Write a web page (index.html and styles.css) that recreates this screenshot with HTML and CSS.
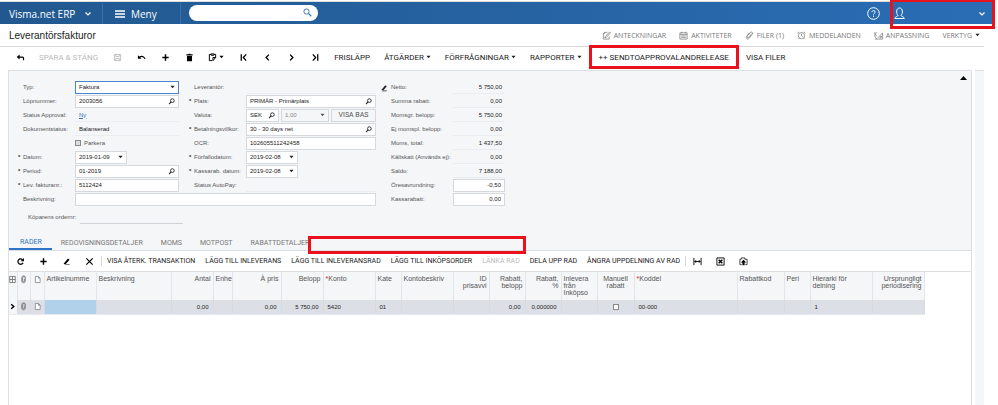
FILE: index.html
```html
<!DOCTYPE html>
<html lang="sv">
  <head>
    <meta charset="utf-8">
    <title>Leverantörsfakturor</title>
    <link rel="stylesheet" href="styles.css">
  </head>
  <body>
    <!-- shared icons -->
    <svg class="defs" width="0" height="0">
      <symbol id="i-search" viewBox="0 0 8 8"><circle cx="5" cy="3" r="2.1" fill="none" stroke="currentColor"/><path d="M3.5 4.5L1.2 7" stroke="currentColor" stroke-width="1.2"/></symbol>
      <symbol id="i-caret" viewBox="0 0 6 4"><path d="M.5.5h5L3 3.5z" fill="currentColor"/></symbol>
      <symbol id="i-chev" viewBox="0 0 8 6"><path d="M1.5 1.5L4 4l2.500-2.500" fill="none" stroke="currentColor" stroke-width="1.200"/></symbol>
      <symbol id="i-plus" viewBox="0 0 10 10"><path d="M5 1.500v7M1.500 5h7" stroke="currentColor" stroke-width="1.600"/></symbol>
      <symbol id="i-pen" viewBox="0 0 10 10"><path d="M2 7.200L6.600 1.600l1.800 1.500L4.200 7.700H2zM2 9h6.500v-.8H4z" fill="currentColor"/></symbol>
      <symbol id="i-clip" viewBox="0 0 10 10"><path d="M7.500 3L4 7.200c-1 1-2.500-.2-1.700-1.300L6 1.600c1.300-1.200 3.200.4 2.200 1.800L4.600 8.200C3 10 .3 8 1.700 6L5 2" fill="none" stroke="currentColor" stroke-width=".8"/></symbol>
      <symbol id="i-clip2" viewBox="0 0 8 10"><path d="M2 3v4c0 2.300 4 2.300 4 0V3c0-2-3-2-3 0v4c0 1 2 1 2 0V4M2 3c0-3 4-2.500 4.500 0" fill="none" stroke="currentColor"/></symbol>
      <symbol id="i-doc" viewBox="0 0 8 10"><path d="M1.500 1.500h3.500l2 2v5H1.500zM5 1.500v2h2" fill="#fff" stroke="currentColor" stroke-width=".8"/></symbol>
    </svg>

    <header class="topbar">
      <button class="brand">Visma.net ERP <svg class="chev"><use href="#i-chev"/></svg></button>
      <button class="menu">
        <svg width="10" height="8" viewBox="0 0 10 8"><path d="M0 1h10M0 4h10M0 7h10" stroke="#fff" stroke-width="1.400"/></svg>
        Meny
      </button>
      <label class="search">
        <input type="text" aria-label="Sök">
        <svg class="lens" width="9" height="9" viewBox="0 0 9 9"><circle cx="3.500" cy="3.500" r="2.600" fill="none" stroke="#3f79b8"/><path d="M5.400 5.400L8.300 8.300" stroke="#3f79b8" stroke-width="1.300"/></svg>
      </label>
      <button class="help" aria-label="Hjälp">
        <svg width="13" height="13" viewBox="0 0 13 13" fill="none" stroke="#fff"><circle cx="6.500" cy="6.500" r="5.800"/><path d="M4.900 5.200c0-2.200 3.400-2 3.300-.1 0 1.200-1.700 1.200-1.700 2.600"/><path d="M6.500 8.700v1.200"/></svg>
      </button>
      <button class="user" aria-label="Användare">
        <svg width="11" height="13" viewBox="0 0 11 13" fill="none" stroke="#fff"><path d="M4 8.500C2 6.500 2 1 5.500 1S9 6.500 7 8.500c0 1 3 1 3.300 3H.7c.3-2 3.300-2 3.300-3z"/></svg>
        <svg class="chev"><use href="#i-chev"/></svg>
      </button>
    </header>

    <div class="titlebar">
      <h1>Leverantörsfakturor</h1>
      <nav class="links">
        <a href="#"><svg viewBox="0 0 10 10"><path d="M6 1.500H3L1.500 3v6h6.500V6M3.500 6.500L8.500 1l1 1-5 5.300-1.500.3zM1.500 3H3V1.500" fill="none" stroke="currentColor" stroke-width=".8"/></svg>ANTECKNINGAR</a>
        <a href="#"><svg viewBox="0 0 10 10"><path d="M1 2h8v7H1zM1 4h8M3 .8V2.500M7 .8V2.500M2.500 5.500h5M2.500 7.200h5" fill="none" stroke="currentColor" stroke-width=".8"/></svg>AKTIVITETER</a>
        <a href="#"><svg><use href="#i-clip"/></svg>FILER (1)</a>
        <a href="#"><svg viewBox="0 0 10 10"><path d="M5 3v2.500l1.500.8M.6 2.500L2.300 1M9.400 2.500L7.700 1M2.300 8L1.500 9M7.700 8l.8 1" fill="none" stroke="currentColor" stroke-width=".8"/><circle cx="5" cy="5.200" r="3.500" fill="none" stroke="currentColor" stroke-width=".8"/></svg>MEDDELANDEN</a>
        <a href="#"><svg viewBox="0 0 10 10"><path d="M1 1v5l2 3M3 1.500L1.500 3.500 3 6M1 9h8.500V2L4.500 7.500M6.500 7.500H8V5.500z" fill="none" stroke="currentColor" stroke-width=".8"/></svg>ANPASSNING</a>
        <a href="#">VERKTYG<svg class="caret"><use href="#i-caret"/></svg></a>
      </nav>
    </div>

    <div class="toolbar">
      <button class="ico" aria-label="Tillbaka"><svg viewBox="0 0 10 10"><path d="M.8 4.500L4 1.800v2h3c1.500 0 2 .8 2 2V8H7.700V6.300c0-.8-.2-1-.9-1H4v2z" fill="currentColor"/></svg></button>
      <button class="off" disabled>SPARA &amp; STÄNG</button>
      <button class="ico off" disabled aria-label="Spara"><svg viewBox="0 0 10 10"><path d="M1.500 1.500h7v7h-7zM3 1.500v2.300h4V1.500M3 8.500V6h4v2.500" fill="none" stroke="currentColor"/></svg></button>
      <button class="ico" aria-label="Ångra"><svg viewBox="0 0 10 10"><path d="M1 2.500v4h4L3.600 5.200C5 4 7 4.300 8.600 7L9.500 6.500C8 3 5 2.300 2.600 4z" fill="currentColor"/></svg></button>
      <button class="ico" aria-label="Ny"><svg><use href="#i-plus"/></svg></button>
      <button class="ico" aria-label="Ta bort"><svg viewBox="0 0 10 10"><path d="M1.500 1.500h2.300l.4-.8h1.600l.4.8h2.300v1.200h-7zM2.200 3.300h5.600v6H2.200z" fill="currentColor"/></svg></button>
      <button class="ico wide" aria-label="Urklipp"><svg viewBox="0 0 10 10"><path d="M3.500 1.500h-2v7h3M6.500 1.500h2v3.500L5.500 8.500M3.500 2.500v-1.500h3v1.500zM8.500 5h-3v3.500" fill="none" stroke="currentColor" stroke-width="1.100"/></svg><svg class="caret"><use href="#i-caret"/></svg></button>
      <button class="ico" aria-label="Första"><svg viewBox="0 0 10 10"><path d="M2.500 1.500v7M8 1.500L4.800 5 8 8.500" fill="none" stroke="currentColor" stroke-width="1.400"/></svg></button>
      <button class="ico" aria-label="Föregående"><svg viewBox="0 0 10 10"><path d="M6.500 1.800L3.500 5l3 3.200" fill="none" stroke="currentColor" stroke-width="1.500"/></svg></button>
      <button class="ico" aria-label="Nästa"><svg viewBox="0 0 10 10"><path d="M3.500 1.800L6.500 5l-3 3.200" fill="none" stroke="currentColor" stroke-width="1.500"/></svg></button>
      <button class="ico" aria-label="Sista"><svg viewBox="0 0 10 10"><path d="M7.500 1.500v7M2 1.500L5.200 5 2 8.500" fill="none" stroke="currentColor" stroke-width="1.400"/></svg></button>
      <button>FRISLÄPP</button>
      <button>ÅTGÄRDER<svg class="caret"><use href="#i-caret"/></svg></button>
      <button>FÖRFRÅGNINGAR<svg class="caret"><use href="#i-caret"/></svg></button>
      <button>RAPPORTER<svg class="caret"><use href="#i-caret"/></svg></button>
      <button class="marked">++ SENDTOAPPROVALANDRELEASE</button>
      <button>VISA FILER</button>
    </div>

    <main>
      <section class="panel">
        <button class="collapse" aria-label="Fäll ihop"><svg width="7" height="4" viewBox="0 0 7 4"><path d="M0 4L3.500 0 7 4z"/></svg></button>
        <form class="form">
          <label for="typ">Typ:</label>
          <div class="field focus"><select id="typ"><option>Faktura</option></select><svg class="caret"><use href="#i-caret"/></svg></div>
          <label for="lev">Leverantör:</label>
          <div class="line"><output id="lev"></output></div>
          <label for="netto"><svg class="pen"><use href="#i-pen"/></svg>Netto:</label>
          <div class="line num"><output id="netto">5 750,00</output></div>

          <label for="lop">Löpnummer:</label>
          <div class="field"><input id="lop" value="2003056"><svg class="find"><use href="#i-search"/></svg></div>
          <label class="req" for="plats">Plats:</label>
          <div class="field"><input id="plats" value="PRIMÄR - Primärplats"><svg class="find"><use href="#i-search"/></svg></div>
          <label for="rab">Summa rabatt:</label>
          <div class="line num"><output id="rab">0,00</output></div>

          <span class="lbl">Status Approval:</span>
          <div class="line"><a href="#">Ny</a></div>
          <label for="valuta">Valuta:</label>
          <div class="currency">
            <div class="field"><input id="valuta" value="SEK"><svg class="find"><use href="#i-search"/></svg></div>
            <div class="field dis"><select aria-label="Kurs" disabled><option>1,00</option></select><svg class="caret"><use href="#i-caret"/></svg></div>
            <button type="button">VISA BAS</button>
          </div>
          <label for="mgr">Momsgr. belopp:</label>
          <div class="line num"><output id="mgr">5 750,00</output></div>

          <label for="status">Dokumentstatus:</label>
          <div class="line"><output id="status">Balanserad</output></div>
          <label class="req" for="villkor">Betalningsvillkor:</label>
          <div class="field"><input id="villkor" value="30 - 30 days net"><svg class="find"><use href="#i-search"/></svg></div>
          <label for="ej">Ej momspl. belopp:</label>
          <div class="line num"><output id="ej">0,00</output></div>

          <span></span>
          <div class="check"><input type="checkbox" id="parkera"><label for="parkera">Parkera</label></div>
          <label for="ocr">OCR:</label>
          <div class="field"><input id="ocr" value="102605511242458"></div>
          <label for="moms">Moms, total:</label>
          <div class="line num"><output id="moms">1 437,50</output></div>

          <label class="req" for="datum">Datum:</label>
          <div class="field date"><input id="datum" value="2019-01-09"><svg class="caret"><use href="#i-caret"/></svg></div>
          <label class="req" for="forfall">Förfallodatum:</label>
          <div class="field date"><input id="forfall" value="2019-02-08"><svg class="caret"><use href="#i-caret"/></svg></div>
          <label for="kall">Källskatt (Används ej):</label>
          <div class="line num"><output id="kall">0,00</output></div>

          <label class="req" for="period">Period:</label>
          <div class="field"><input id="period" value="01-2019"><svg class="find"><use href="#i-search"/></svg></div>
          <label class="req" for="kassa">Kassarab. datum:</label>
          <div class="field date"><input id="kassa" value="2019-02-08"><svg class="caret"><use href="#i-caret"/></svg></div>
          <label for="saldo">Saldo:</label>
          <div class="line num"><output id="saldo">7 188,00</output></div>

          <label class="req" for="fnr">Lev. fakturanr.:</label>
          <div class="field"><input id="fnr" value="5112424"></div>
          <label for="autopay">Status AutoPay:</label>
          <div class="line"><output id="autopay"></output></div>
          <label for="ores">Öresavrundning:</label>
          <div class="field num"><input id="ores" value="-0,50"></div>

          <label for="besk">Beskrivning:</label>
          <div class="field span"><input id="besk"></div>
          <label for="krab">Kassarabatt:</label>
          <div class="field num"><input id="krab" value="0,00"></div>
        </form>
        <div class="order">
          <label for="order">Köparens ordernr:</label>
          <input id="order">
        </div>

        <div class="tabs" role="tablist">
          <button class="active" role="tab">RADER</button>
          <button role="tab">REDOVISNINGSDETALJER</button>
          <button role="tab">MOMS</button>
          <button role="tab">MOTPOST</button>
          <button role="tab">RABATTDETALJER</button>
          <span class="tabmark"></span>
        </div>

        <div class="gridbar">
          <button class="ico" aria-label="Uppdatera"><svg viewBox="0 0 10 10"><path d="M7.800 6.500A3 3 0 1 1 7.300 3" fill="none" stroke="currentColor" stroke-width="1.400"/><path d="M8.800 1v3.700H5.200z" fill="currentColor"/></svg></button>
          <button class="ico" aria-label="Lägg till rad"><svg><use href="#i-plus"/></svg></button>
          <button class="ico" aria-label="Redigera"><svg><use href="#i-pen"/></svg></button>
          <button class="ico" aria-label="Radera"><svg viewBox="0 0 10 10"><path d="M1.500 1.500l7 7M8.500 1.500l-7 7" stroke="currentColor" stroke-width="1.300"/></svg></button>
          <i class="sep"></i>
          <button>VISA ÅTERK. TRANSAKTION</button>
          <button>LÄGG TILL INLEVERANS</button>
          <button>LÄGG TILL INLEVERANSRAD</button>
          <button>LÄGG TILL INKÖPSORDER</button>
          <button class="off" disabled>LÄNKA RAD</button>
          <button>DELA UPP RAD</button>
          <button>ÅNGRA UPPDELNING AV RAD</button>
          <i class="sep"></i>
          <button class="ico" aria-label="Anpassa bredd"><svg viewBox="0 0 10 10"><path d="M1 1v8M9 1v8M2 5h6M3.500 3.500L2 5l1.500 1.500M6.500 3.500L8 5 6.500 6.500" fill="none" stroke="currentColor"/></svg></button>
          <button class="ico" aria-label="Exportera"><svg viewBox="0 0 10 10"><path d="M1 1h8v8H1z" fill="none" stroke="currentColor"/><path d="M3 3l4 4M7 3L3 7" stroke="currentColor" stroke-width="1.600"/></svg></button>
          <button class="ico" aria-label="Ladda upp"><svg viewBox="0 0 10 10"><path d="M3 8.500H1v-6h1.500V1h4v1.500H9v6H7" fill="none" stroke="currentColor" stroke-width=".8"/><path d="M5 3L2 6h1.800v3.200h2.400V6H8z" fill="currentColor"/></svg></button>
        </div>

        <div class="grid">
          <table>
            <colgroup>
              <col class="w8"><col class="w13"><col class="w14"><col class="w52"><col class="w75"><col class="w42"><col class="w19"><col class="w49"><col class="w42"><col class="w52"><col class="w26"><col class="w52"><col class="w36"><col class="w36"><col class="w36"><col class="w36"><col class="w37"><col class="w103"><col class="w47"><col class="w26"><col class="w62"><col class="w52">
            </colgroup>
            <thead>
              <tr>
                <th class="pic"><svg viewBox="0 0 8 10"><path d="M.8 1.500h6.400v7H.8zM.8 5h6.400M4 1.500v7" fill="none" stroke="currentColor"/></svg></th>
                <th class="pic"><svg><use href="#i-clip2"/></svg></th>
                <th class="pic"><svg><use href="#i-doc"/></svg></th>
                <th>Artikelnumme</th>
                <th>Beskrivning</th>
                <th class="r">Antal</th>
                <th>Enhe</th>
                <th class="r">À pris</th>
                <th class="r">Belopp</th>
                <th class="must">Konto</th>
                <th>Kate</th>
                <th>Kontobeskriv</th>
                <th class="r">ID<br>prisavvi</th>
                <th class="r">Rabatt,<br>belopp</th>
                <th class="r">Rabatt,<br>%</th>
                <th>Inlevera<br>från<br>Inköpso</th>
                <th class="c">Manuell<br>rabatt</th>
                <th class="must">Koddel</th>
                <th>Rabattkod</th>
                <th>Peri</th>
                <th>Hierarki för<br>delning</th>
                <th class="r">Ursprungligt<br>periodisering</th>
              </tr>
            </thead>
            <tbody>
              <tr>
                <td class="pic cur"><svg viewBox="0 0 8 10"><path d="M2.500 2.500L5.500 5l-3 2.500" fill="none" stroke="#000" stroke-width="1.600"/></svg></td>
                <td class="pic"><svg><use href="#i-clip2"/></svg></td>
                <td class="pic"><svg><use href="#i-doc"/></svg></td>
                <td class="sel"></td>
                <td></td>
                <td class="r">0,00</td>
                <td></td>
                <td class="r">0,00</td>
                <td class="r">5 750,00</td>
                <td>5420</td>
                <td>01</td>
                <td></td>
                <td></td>
                <td class="r">0,00</td>
                <td class="r">0,000000</td>
                <td></td>
                <td class="c"><input type="checkbox" aria-label="Manuell rabatt"></td>
                <td>00-000</td>
                <td></td>
                <td></td>
                <td>1</td>
                <td></td>
              </tr>
            </tbody>
          </table>
        </div>
      </section>
      <aside class="gutter"></aside>
    </main>
  </body>
</html>
```
FILE: styles.css
```css
*{
  box-sizing: border-box;
  margin: 0;
  padding: 0;
}
body{
  min-height: 100vh;
  display: flex;
  flex-direction: column;
  overflow-x: hidden;
  background-color: #fff;
  color: #222;
  font: 6px "Liberation Sans", Arial, sans-serif;
}
button, input, select{
  border: 0;
  background: none;
  color: inherit;
  font: inherit;
  appearance: none;
  outline: none;
}
svg{
  flex: none;
}
.defs{
  position: absolute;
}
.caret{
  width: 5px;
  height: 4px;
}
.chev{
  width: 8px;
  height: 6px;
}

/* top bar */
.topbar{
  height: 24px;
  margin-right: 3px;
  padding-top: 2px;
  display: flex;
  background: linear-gradient(90deg, #22588f, #2a6db5) 0 1px no-repeat;
  border-top: 1px solid #fff;
  box-shadow: inset 0 1px #ddd;
  color: #fff;
  font: 10px "Open Sans", sans-serif;
}
.topbar button{
  display: flex;
  align-items: center;
  border-right: 1px solid #3a6fa8;
}
.brand{
  width: 103px;
  padding-left: 9px;
  gap: 9px;
}
.menu{
  width: 78px;
  padding-left: 12px;
  gap: 6px;
}
.search{
  position: relative;
  padding: 2px 0 0 8px;
}
.search input{
  width: 129px;
  height: 16px;
  padding: 0 18px 0 8px;
  border-radius: 8px;
  background-color: #fff;
  color: #222;
}
.lens{
  position: absolute;
  right: 6px;
  top: 5px;
}
.topbar .help{
  margin-left: auto;
  padding-right: 10px;
  border: 0;
}
.topbar .user{
  position: relative;
  width: 105px;
  padding: 0 9px 0 4px;
  justify-content: space-between;
  border: 0;
}
.user::after{
  content: "";
  position: absolute;
  inset: -4px 0 -5px 0;
  border: 3px solid #e8111c;
}

/* title and page links */
.titlebar{
  height: 23px;
  margin-right: 14px;
  padding: 0 4px 0 9px;
  display: flex;
  align-items: center;
  justify-content: space-between;
  border-bottom: 1px solid #d9d9d9;
}
h1{
  font-size: 10px;
  font-weight: normal;
}
.links{
  display: flex;
  gap: 13px;
}
.links a{
  display: flex;
  align-items: center;
  gap: 3px;
  color: #777;
  font: 7px "Open Sans", sans-serif;
  text-decoration: none;
}
.links svg{
  width: 9px;
  height: 9px;
}
.links .caret{
  width: 5px;
  height: 4px;
  color: #222;
}

/* toolbars */
.toolbar, .gridbar{
  display: flex;
  color: #222;
  font-family: Roboto, "Liberation Sans", sans-serif;
}
.toolbar{
  height: 23px;
  padding: 0 0 3px 8px;
  font-size: 8px;
}
.toolbar button, .gridbar button{
  display: flex;
  align-items: center;
  justify-content: center;
  gap: 2px;
  padding: 0 7px;
  white-space: nowrap;
}
.toolbar .ico, .gridbar .ico{
  width: 24px;
  padding: 0;
  color: #000;
}
.toolbar .wide{
  width: 30px;
}
.ico svg{
  width: 9px;
  height: 9px;
}
.ico .caret{
  width: 5px;
  height: 4px;
}
.toolbar .off, .gridbar .off{
  color: #bbb;
}
.toolbar .marked{
  height: 24px;
  margin-top: -2px;
  border: 3px solid #e8111c;
}

/* main panel */
main{
  flex: 1;
  margin: 0 14px 0 8px;
  display: flex;
  gap: 3px;
}
.panel{
  position: relative;
  flex: 1;
  min-width: 0;
  display: flex;
  flex-direction: column;
  border: 1px solid #dcdfe3;
  border-bottom: 0;
  background-color: #f4f6f8;
}
.gutter{
  width: 9px;
  background-color: #f4f6f8;
  border-top: 1px solid #dcdfe3;
}
.collapse{
  position: absolute;
  right: 4px;
  top: 5px;
  display: flex;
}
.form{
  padding: 9px 0 0 9px;
  display: grid;
  grid-template-columns: 57px 104px 67px 130px 77px 52px;
  grid-auto-rows: 14px;
  align-items: center;
}
.form > label, .lbl{
  position: relative;
  justify-self: end;
  width: 57px;
  padding-left: 5px;
  color: #555;
  white-space: nowrap;
}
.form > label:has(+ .num){
  width: 62px;
  padding-left: 0;
}
.check{
  display: flex;
  align-items: center;
  gap: 3px;
  color: #555;
}
.req::before{
  content: "*";
  position: absolute;
  left: 0;
  color: #333;
  font-weight: bold;
}
.pen{
  position: absolute;
  right: 100%;
  width: 8px;
  height: 8px;
  margin-right: 3px;
  color: #222;
}
.field, .line{
  height: 13px;
  display: flex;
  align-items: center;
}
.field{
  border: 1px solid #d5d8dc;
  background-color: #fff;
}
.field input, .field select{
  flex: 1;
  min-width: 0;
  height: 11px;
  padding-left: 3px;
}
.field .caret, .field .find{
  margin-right: 3px;
}
.find{
  width: 7px;
  height: 7px;
}
.focus{
  border-color: #4a86d0;
}
.line{
  padding-left: 4px;
  border-bottom: 1px solid #eaecef;
}
.line a{
  color: #2d72b8;
}
.line.num{
  justify-content: flex-end;
  padding-right: 3px;
}
.field.num input{
  padding-right: 3px;
  text-align: right;
}
.date{
  width: 52px;
}
.span{
  grid-column: span 3;
}
.currency{
  display: grid;
  grid-template-columns: 33px 48px 45px;
  gap: 2px;
}
.currency button, .dis{
  border: 1px solid #d5d8dc;
  background-color: #f4f6f8;
  color: #555;
}
.currency button{
  font: 7px Roboto, sans-serif;
}
input[type="checkbox"]{
  width: 6px;
  height: 6px;
  border: 1px solid #8a8a8a;
  background-color: #fff;
}
.check input[type="checkbox"]{
  background-color: #ddd;
}
.order{
  padding: 4px 0 0 19px;
  display: flex;
  align-items: center;
  gap: 2px;
  color: #555;
}
.order label{
  width: 50px;
  white-space: nowrap;
}
.order input{
  width: 103px;
  height: 14px;
  border-bottom: 1px solid #d0d3d7;
}

/* tabs */
.tabs{
  margin-top: 12px;
  height: 15px;
  display: flex;
  border-bottom: 1px solid #d9dce0;
  color: #777;
  font-family: Roboto, "Liberation Sans", sans-serif;
  font-size: 7px;
}
.tabs button{
  padding: 0 9px;
}
.tabs .active{
  padding: 0 10px 0 11px;
  border-bottom: 2px solid #2d72c4;
  color: #2d72c4;
}
.tabmark{
  width: 218px;
  height: 18px;
  margin-left: -10px;
  border: 3px solid #e8111c;
  z-index: 1;
}

/* grid */
.gridbar{
  height: 21px;
  border-bottom: 1px solid #dcdfe3;
  background-color: #fff;
  font-size: 7px;
}
.gridbar button{
  padding: 0 5px;
}
.gridbar .ico{
  width: 23px;
}
.sep{
  width: 1px;
  height: 10px;
  align-self: center;
  background-color: #d5d8dc;
}
.grid{
  flex: 1;
  background-color: #fff;
}
table{
  width: 915px;
  table-layout: fixed;
  border-collapse: collapse;
}
th, td{
  padding: 0 2px;
  overflow: hidden;
  border-right: 1px solid #e2e5e9;
  text-align: left;
  white-space: nowrap;
}
th{
  height: 28px;
  padding-top: 3px;
  background-color: #f4f6f8;
  color: #555;
  font-size: 7px;
  font-weight: normal;
  line-height: 7px;
  vertical-align: top;
}
td{
  height: 14px;
  padding: 0 4px;
  border-right-color: #d7dae0;
  border-bottom: 1px solid #e6e8eb;
  background-color: #dcdfe5;
}
.r{
  text-align: right;
}
.c{
  text-align: center;
}
.must::before{
  content: "*";
  color: #e8111c;
}
.pic{
  padding-left: 0;
  padding-right: 0;
  text-align: center;
}
.pic svg{
  display: block;
  width: 7px;
  height: 9px;
  margin: auto;
  color: #777;
}
.cur{
  background-color: #f4f6f8;
}
.sel{
  background-color: #b1d1eb;
}
.c input{
  display: block;
  margin: auto;
}
.w8{ width: 8px; }
.w13{ width: 13px; }
.w14{ width: 14px; }
.w19{ width: 19px; }
.w26{ width: 26px; }
.w36{ width: 36px; }
.w37{ width: 37px; }
.w42{ width: 42px; }
.w47{ width: 47px; }
.w49{ width: 49px; }
.w52{ width: 52px; }
.w62{ width: 62px; }
.w75{ width: 75px; }
.w103{ width: 103px; }
```
